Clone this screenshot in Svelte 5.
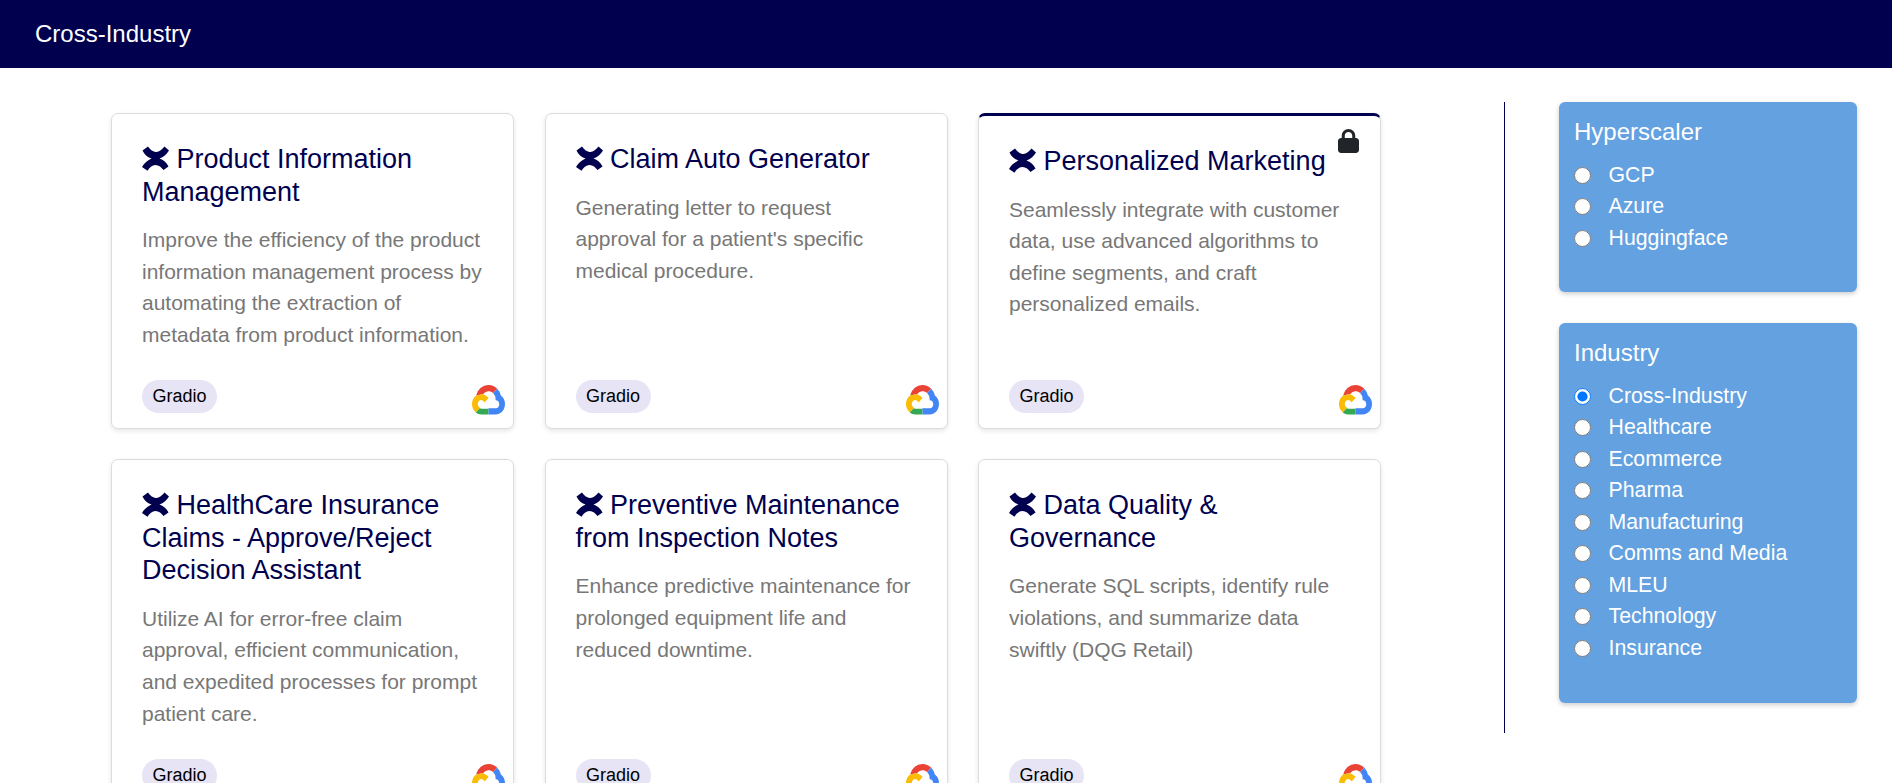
<script>
    const cards = [
        { title: "Product Information Management", desc: "Improve the efficiency of the product information management process by automating the extraction of metadata from product information." },
        { title: "Claim Auto Generator", desc: "Generating letter to request approval for a patient's specific medical procedure." },
        { title: "Personalized Marketing", desc: "Seamlessly integrate with customer data, use advanced algorithms to define segments, and craft personalized emails.", locked: true },
        { title: "HealthCare Insurance Claims - Approve/Reject Decision Assistant", desc: "Utilize AI for error-free claim approval, efficient communication, and expedited processes for prompt patient care." },
        { title: "Preventive Maintenance from Inspection Notes", desc: "Enhance predictive maintenance for prolonged equipment life and reduced downtime." },
        { title: "Data Quality & Governance", desc: "Generate SQL scripts, identify rule violations, and summarize data swiftly (DQG Retail)" }
    ];

    const hyperscalers = ["GCP", "Azure", "Huggingface"];
    const industries = ["Cross-Industry", "Healthcare", "Ecommerce", "Pharma", "Manufacturing", "Comms and Media", "MLEU", "Technology", "Insurance"];

    let hyperscaler = $state("");
    let industry = $state("Cross-Industry");
</script>

<div class="page">
    <header class="topbar">Cross-Industry</header>

    <div class="content">
        <main class="grid">
            {#each cards as card, i}
                <article class="card" class:locked={card.locked}>
                    {#if card.locked}
                        <svg class="lock" viewBox="0 0 448 512" aria-hidden="true">
                            <path fill="#212529" d="M144 144v48H304V144c0-44.2-35.8-80-80-80s-80 35.8-80 80zM80 192V144C80 64.5 144.5 0 224 0s144 64.5 144 144v48h16c35.3 0 64 28.7 64 64V448c0 35.3-28.7 64-64 64H64c-35.3 0-64-28.7-64-64V256c0-35.3 28.7-64 64-64H80z"/>
                        </svg>
                    {/if}
                    <h2>
                        <svg class="mark" viewBox="0 0 27 25" aria-hidden="true">
                            <path fill="#00004f" d="M6 .5C8 3.5 10.5 5.5 13.5 6 17 6.500 20 3.500 22.500.5L27 4.500C24.500 8.500 21.500 11 17.500 12.500 21.500 14 24.500 16.500 26.500 20.500L21.500 24C19.500 21.500 17 19 13.500 19 10 19 7.500 21.500 5.500 24.800L0 21C2 17.500 5 14.500 9.500 12.500 5 11 2.500 8.500.5 4.500Z"/>
                        </svg>
                        {card.title}
                    </h2>
                    <p>{card.desc}</p>
                    <span class="badge">Gradio</span>
                    <svg class="cloud" viewBox="0 2.38 24 20.22" preserveAspectRatio="none" aria-hidden="true">
                        <clipPath id="cloud-{i}">
                            <path d="M12.19 2.38a9.344 9.344 0 0 0-9.234 6.893c.053-.02-.055.013 0 0-3.875 2.551-3.922 8.11-.247 10.941l.006-.007-.007.03a6.717 6.717 0 0 0 4.077 1.356h5.173l.03.03h5.192c6.687.053 9.376-8.605 3.835-12.35a9.365 9.365 0 0 0-2.821-4.552l-.043.043.006-.05A9.344 9.344 0 0 0 12.19 2.38zm-.358 4.146c1.244-.04 2.518.368 3.486 1.15a5.186 5.186 0 0 1 1.862 4.078v.518c3.53-.07 3.53 5.262 0 5.193h-5.193l-.008.009v-.04H6.785a2.59 2.59 0 0 1-1.067-.23h.001a2.597 2.597 0 1 1 3.437-3.437l3.013-3.012A6.747 6.747 0 0 0 8.11 8.24c.018-.01.04-.026.054-.023a5.186 5.186 0 0 1 3.67-1.69z"/>
                        </clipPath>
                        <g clip-path="url(#cloud-{i})">
                            <polygon fill="#EA4335" points="2.96,9.27 2.9,2 19,2 18.7,4.3 15.3,7.7 8.11,8.24"/>
                            <polygon fill="#FBBC05" points="0,9.3 2.96,9.27 8.11,8.24 13,11 9.5,14.5 5.7,17.6 2.7,20.3 0,23"/>
                            <polygon fill="#34A853" points="2.7,20.3 5.7,17.55 6.8,17.9 12,17.9 12,23 2.7,23"/>
                            <polygon fill="#4285F4" points="15.3,7.7 18.7,4.3 24,4 24,23 12,23 12,17"/>
                        </g>
                    </svg>
                </article>
            {/each}
        </main>

        <div class="divider"></div>

        <aside class="filters">
            <section class="panel">
                <h3>Hyperscaler</h3>
                {#each hyperscalers as name}
                    <label><input type="radio" name="hyperscaler" value={name} bind:group={hyperscaler} />{name}</label>
                {/each}
            </section>
            <section class="panel">
                <h3>Industry</h3>
                {#each industries as name}
                    <label><input type="radio" name="industry" value={name} bind:group={industry} />{name}</label>
                {/each}
            </section>
        </aside>
    </div>
</div>

<style>
    :global(body) {
        margin: 0;
        background: #fff;
        font-family: "Liberation Sans", Arial, sans-serif;
    }

    .page {
        height: 783px;
        overflow: hidden;
    }

    .topbar {
        height: 68px;
        padding-left: 35px;
        display: flex;
        align-items: center;
        background: #00004f;
        color: #fff;
        font-size: 24px;
    }

    .content {
        display: flex;
        align-items: flex-start;
        padding: 34px 0 0 111px;
    }

    .grid {
        display: grid;
        grid-template-columns: repeat(3, 403px);
        column-gap: 30.5px;
        row-gap: 30px;
        margin-top: 11px;
        width: 1392.5px;
        flex: none;
    }

    .card {
        position: relative;
        display: flex;
        flex-direction: column;
        align-items: flex-start;
        box-sizing: border-box;
        padding: 29px 29px 15px 30px;
        background: #fff;
        border: 1px solid #dcdcdc;
        border-radius: 7px;
        box-shadow: 0 2px 5px rgba(0, 0, 0, 0.1);
    }

    .card.locked {
        border-top: 3px solid #00004f;
    }

    h2 {
        margin: 0 0 16px;
        font-size: 27px;
        line-height: 32.5px;
        font-weight: 400;
        color: #00004f;
    }

    .mark {
        width: 27px;
        height: 25px;
        vertical-align: -3px;
    }

    p {
        margin: 0 0 30px;
        max-width: 340.5px;
        font-size: 21px;
        line-height: 31.6px;
        color: #777;
    }

    .badge {
        margin-top: auto;
        height: 33px;
        padding: 0 10.5px;
        display: flex;
        align-items: center;
        border-radius: 17px;
        background: #e6e4f5;
        color: #000;
        font-size: 18px;
    }

    .cloud {
        position: absolute;
        right: 8px;
        bottom: 12px;
        width: 33px;
        height: 31px;
    }

    .lock {
        position: absolute;
        top: 13px;
        right: 21px;
        width: 21px;
        height: 24px;
    }

    .divider {
        width: 1px;
        height: 631px;
        background: #00004f;
        flex: none;
    }

    .filters {
        display: flex;
        flex-direction: column;
        gap: 31px;
        margin-left: 54.5px;
        width: 298px;
        flex: none;
    }

    .panel {
        box-sizing: border-box;
        padding: 15px 15px 0;
        background: #63a1e0;
        border-radius: 6px;
        box-shadow: 0 2px 5px rgba(0, 0, 0, 0.2);
        color: #fff;
    }

    .panel:first-child {
        height: 190px;
    }

    .panel:last-child {
        height: 380px;
    }

    h3 {
        margin: 0 0 12.5px;
        font-size: 24px;
        line-height: 30px;
        font-weight: 400;
    }

    label {
        display: flex;
        align-items: center;
        height: 31.5px;
        font-size: 21.3px;
    }

    input {
        width: 17px;
        height: 17px;
        margin: 0 17.5px 0 0;
        flex: none;
    }
</style>
